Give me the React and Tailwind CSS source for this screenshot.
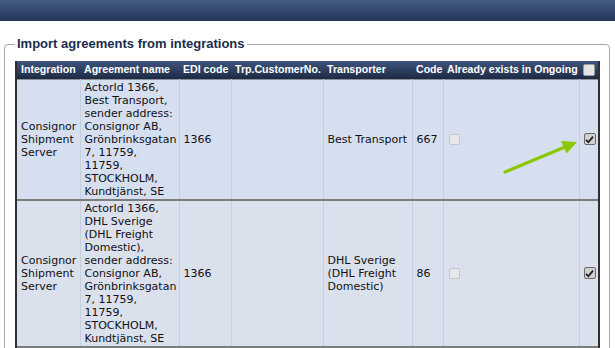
import React from "react";

const rows = [
  {
    integration: ["Consignor", "Shipment", "Server"],
    name: [
      "ActorId 1366,",
      "Best Transport,",
      "sender address:",
      "Consignor AB,",
      "Grönbrinksgatan",
      "7, 11759,",
      "11759,",
      "STOCKHOLM,",
      "Kundtjänst, SE",
    ],
    edi: "1366",
    transporter: ["Best Transport"],
    code: "667",
    bg: "bg-[#d5dff0]",
  },
  {
    integration: ["Consignor", "Shipment", "Server"],
    name: [
      "ActorId 1366,",
      "DHL Sverige",
      "(DHL Freight",
      "Domestic),",
      "sender address:",
      "Consignor AB,",
      "Grönbrinksgatan",
      "7, 11759,",
      "11759,",
      "STOCKHOLM,",
      "Kundtjänst, SE",
    ],
    edi: "1366",
    transporter: ["DHL Sverige", "(DHL Freight", "Domestic)"],
    code: "86",
    bg: "bg-[#dae0ec]",
  },
];

function Lines({ lines }) {
  return (
    <div className="whitespace-nowrap">
      {lines.map((l, i) => (
        <div key={i}>{l}</div>
      ))}
    </div>
  );
}

function DisabledBox() {
  return (
    <span className="block w-[11px] h-[11px] rounded-[2px] border border-[#c3c6cc] bg-[#e6e8ec]" />
  );
}

function CheckedBox() {
  return (
    <span className="flex items-center justify-center w-[12px] h-[12px] rounded-[2px] border border-[#6a6a6a] bg-[#d0d0d0]">
      <svg width="9" height="9" viewBox="0 0 9 9">
        <path d="M1 4.8 L3.4 7.2 L8 1.6" fill="none" stroke="#222" strokeWidth="1.8" />
      </svg>
    </span>
  );
}

const th =
  "h-[18px] p-0 pl-[4px] text-left align-middle font-bold text-white whitespace-nowrap bg-linear-to-b from-[#3f557d] to-[#1d2a44]";
const td = "p-0 py-[1px] pl-[4px] align-middle border-r border-[#c6cfdd]";

export default function App() {
  return (
    <div className="relative min-h-screen bg-white">
      <div className="h-[21px] bg-linear-to-b from-[#435b84] to-[#24365a]" />

      <fieldset className="mt-[15px] ml-[4px] w-[606px] border border-[#a6a9ad] rounded-[4px] pl-[10px] pr-[9px] pt-[9px] pb-4">
        <legend className="px-[2px] text-[13px] leading-[16px] font-bold text-[#1b2b4b] font-['Liberation_Sans',Arial,sans-serif]">
          Import agreements from integrations
        </legend>

        <div className="w-[585px] border-x-2 border-[#2e2e2e]">
          <table className="w-full table-fixed border-collapse text-[11px] leading-[13px] text-[#111] font-['DejaVu_Sans',Verdana,sans-serif]">
            <colgroup>
              <col className="w-[63px]" />
              <col className="w-[99px]" />
              <col className="w-[52px]" />
              <col className="w-[92px]" />
              <col className="w-[89px]" />
              <col className="w-[31px]" />
              <col className="w-[136px]" />
              <col className="w-[19px]" />
            </colgroup>
            <thead className="font-['Liberation_Sans',Arial,sans-serif] text-[10.6px]">
              <tr className="border-b border-[#8a8f99]">
                <th className={th + " pl-[2px]"}>Integration</th>
                <th className={th + " pl-[3px]"}>Agreement name</th>
                <th className={th + " pl-[3px]"}>EDI code</th>
                <th className={th + " pl-[2px]"}>Trp.CustomerNo.</th>
                <th className={th}>Transporter</th>
                <th className={th + " pl-[3px]"}>Code</th>
                <th className={th + " pl-[3px]"}>Already exists in Ongoing</th>
                <th className={th + " pl-[3px]"}>
                  <span className="block w-[12px] h-[12px] rounded-[2px] border border-[#9a9ea6] bg-[#e4e4e4]" />
                </th>
              </tr>
            </thead>
            <tbody>
              {rows.map((r, i) => (
                <tr key={i} className={r.bg + " border-b-2 border-[#7c7c7c]"}>
                  <td className={td + " pl-[3px]"}>
                    <Lines lines={r.integration} />
                  </td>
                  <td className={td}>
                    <Lines lines={r.name} />
                  </td>
                  <td className={td}>{r.edi}</td>
                  <td className={td}></td>
                  <td className={td}>
                    <Lines lines={r.transporter} />
                  </td>
                  <td className={td}>{r.code}</td>
                  <td className={td + " pl-[5px]"}>
                    <DisabledBox />
                  </td>
                  <td className="p-0 pl-[4px] align-middle">
                    <CheckedBox />
                  </td>
                </tr>
              ))}
              <tr className="bg-white h-[24px]">
                <td className={td}></td>
                <td className={td}></td>
                <td className={td}></td>
                <td className={td}></td>
                <td className={td}></td>
                <td className={td}></td>
                <td className={td}></td>
                <td className="p-0"></td>
              </tr>
            </tbody>
          </table>
        </div>
      </fieldset>

      <svg
        className="absolute left-[495px] top-[132px]"
        width="90"
        height="50"
        viewBox="0 0 90 50"
      >
        <line x1="10" y1="40" x2="70" y2="15" stroke="#8cc800" strokeWidth="3.2" strokeLinecap="round" />
        <polygon points="82,10 71.5,21.5 66,9" fill="#8cc800" />
      </svg>
    </div>
  );
}
